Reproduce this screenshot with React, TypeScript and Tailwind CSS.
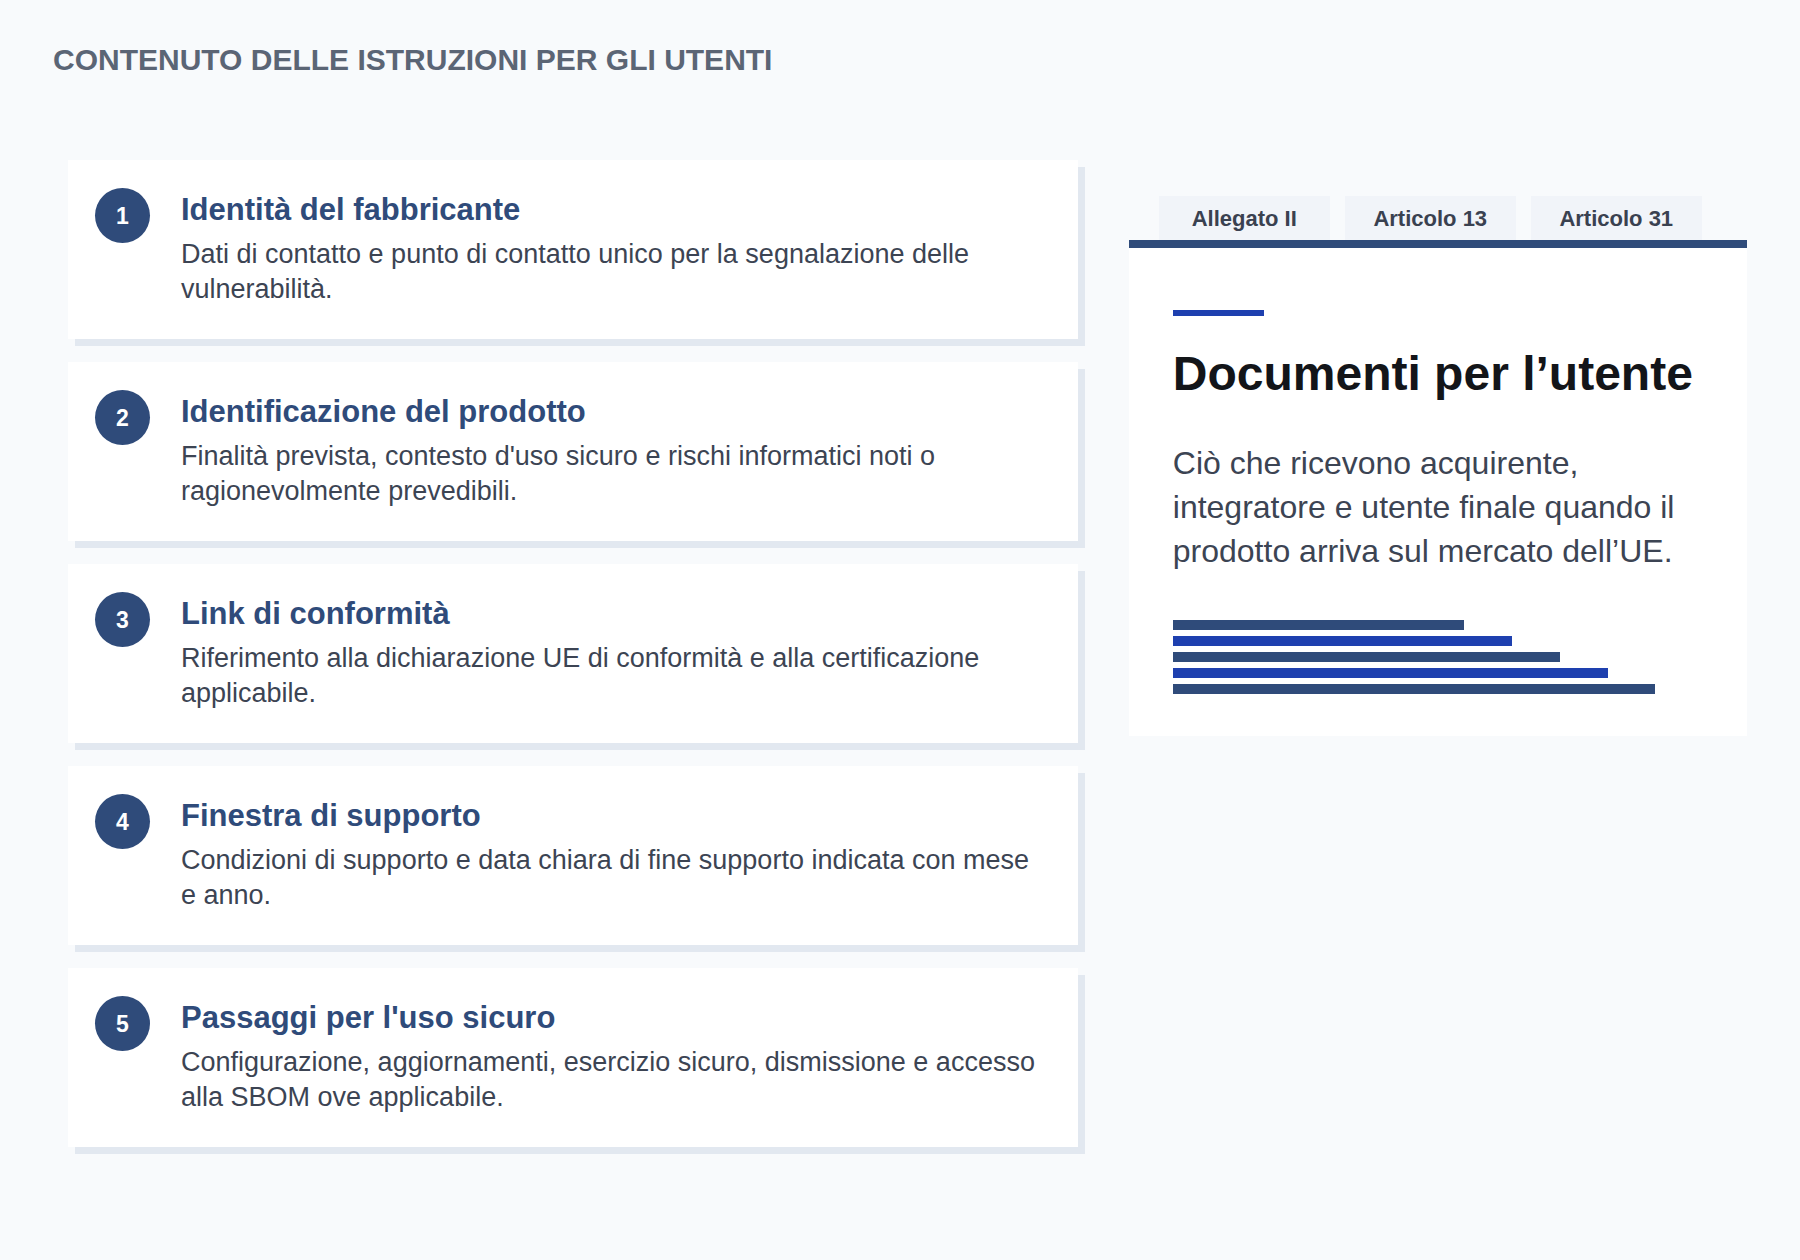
const items = [
  {
    n: 1,
    title: "Identità del fabbricante",
    body: "Dati di contatto e punto di contatto unico per la segnalazione delle vulnerabilità.",
  },
  {
    n: 2,
    title: "Identificazione del prodotto",
    body: "Finalità prevista, contesto d'uso sicuro e rischi informatici noti o ragionevolmente prevedibili.",
  },
  {
    n: 3,
    title: "Link di conformità",
    body: "Riferimento alla dichiarazione UE di conformità e alla certificazione applicabile.",
  },
  {
    n: 4,
    title: "Finestra di supporto",
    body: "Condizioni di supporto e data chiara di fine supporto indicata con mese e anno.",
  },
  {
    n: 5,
    title: "Passaggi per l'uso sicuro",
    body: "Configurazione, aggiornamenti, esercizio sicuro, dismissione e accesso alla SBOM ove applicabile.",
  },
];

const tabs = ["Allegato II", "Articolo 13", "Articolo 31"];

const bars = [
  { w: "w-[55%]", c: "bg-[#2f4b7a]" },
  { w: "w-[64%]", c: "bg-[#1e40af]" },
  { w: "w-[73%]", c: "bg-[#2f4b7a]" },
  { w: "w-[82%]", c: "bg-[#1e40af]" },
  { w: "w-[91%]", c: "bg-[#2f4b7a]" },
];

export default function App() {
  return (
    <main className="min-h-screen bg-[#f8fafc] px-[53px] pt-[42px] font-['Liberation_Sans',Arial,sans-serif]">
      <h1 className="text-[30px] font-bold uppercase leading-[36px] text-[#5b6575]">
        Contenuto delle istruzioni per gli utenti
      </h1>

      <div className="mt-[82px] flex items-start pl-[15px]">
        {/* elenco */}
        <div className="flex w-[1011px] flex-col gap-[23px]">
          {items.map((it) => (
            <div
              key={it.n}
              className="flex bg-white pb-[32px] pl-[27px] pr-[36px] pt-[28px] shadow-[7px_7px_0_0_#e2e8f0]"
            >
              <div className="flex h-[55px] w-[55px] shrink-0 items-center justify-center rounded-full bg-[#2f4b7a] pt-[2px] text-[23px] font-bold text-white">
                {it.n}
              </div>
              <div className="ml-[31px] flex-1">
                <h2 className="text-[31px] font-bold leading-[43px] text-[#2f4b7a]">
                  {it.title}
                </h2>
                <p className="mt-[6px] text-[27px] leading-[35px] text-[#3c4453]">
                  {it.body}
                </p>
              </div>
            </div>
          ))}
        </div>

        {/* pannello */}
        <div className="ml-[51px] mt-[36px] w-[619px]">
          <div className="flex gap-[15px] pl-[30px]">
            {tabs.map((t) => (
              <div
                key={t}
                className="flex h-[44px] w-[171px] items-center justify-center bg-[#f1f4f9] text-[22px] font-bold text-[#3a4150]"
              >
                {t}
              </div>
            ))}
          </div>
          <div className="border-t-[8px] border-[#2f4b7a] bg-white px-[44px] pb-[42px] pt-[62px]">
            <div className="h-[6px] w-[91px] bg-[#1e40af]" />
            <h3 className="mt-[29px] whitespace-nowrap text-[48px] font-bold leading-[1.2] text-[#131519]">
              Documenti per l’utente
            </h3>
            <p className="mt-[38px] text-[32px] leading-[44px] text-[#3c4453]">
              Ciò che ricevono acquirente, integratore e utente finale quando il
              prodotto arriva sul mercato dell’UE.
            </p>
            <div className="mt-[47px] flex flex-col gap-[6px]">
              {bars.map((b, i) => (
                <div key={i} className={`h-[10px] ${b.w} ${b.c}`} />
              ))}
            </div>
          </div>
        </div>
      </div>
    </main>
  );
}
